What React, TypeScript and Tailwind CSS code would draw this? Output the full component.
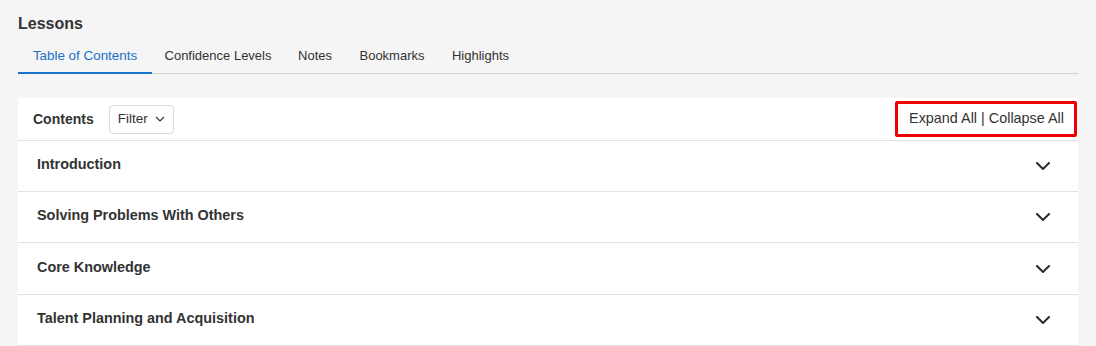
import React from "react";

const Chevron = () => (
  <svg width="14" height="8" viewBox="0 0 14 8" fill="none">
    <path d="M1 1l6 6 6-6" stroke="#2b2b2b" strokeWidth="2" strokeLinecap="square" />
  </svg>
);

const SmallChevron = () => (
  <svg width="10" height="6" viewBox="0 0 10 6" fill="none">
    <path d="M1 1l4 4 4-4" stroke="#333" strokeWidth="1.2" />
  </svg>
);

const tabs: { label: string; w: string }[] = [
  { label: "Table of Contents", w: "w-[134px]" },
  { label: "Confidence Levels", w: "w-[132px]" },
  { label: "Notes", w: "w-[62px]" },
  { label: "Bookmarks", w: "w-[92px]" },
  { label: "Highlights", w: "w-[85px]" },
];
const rows = ["Introduction", "Solving Problems With Others", "Core Knowledge", "Talent Planning and Acquisition"];

export default function App() {
  return (
    <div className="min-h-[346px] bg-[#f5f5f5] px-[18px] pt-[15px] text-[#333]" style={{ fontFamily: '"Liberation Sans", Arial, sans-serif' }}>
      <h1 className="text-[16px] font-bold leading-[18px] text-[#333]">Lessons</h1>
      <div className="mt-[14px] flex border-b border-[#d0d0d0]">
        {tabs.map((t, i) => (
          <div
            key={t.label}
            className={
              i === 0
                ? `${t.w} -mb-px whitespace-nowrap border-b-2 border-[#1a73d0] pt-[1px] pb-[8px] text-center text-[13.4px] leading-[16px] text-[#1a6fc9]`
                : `${t.w} whitespace-nowrap pt-[1px] pb-[8px] text-center text-[13px] leading-[16px] text-[#333]`
            }
          >
            {t.label}
          </div>
        ))}
      </div>
      <div className="mt-[24px] bg-white">
        <div className="flex h-[43px] items-center border-b border-[#e3e3e3] pl-[15px] pr-[2px]">
          <span className="text-[14px] font-bold text-[#333]">Contents</span>
          <button className="ml-[15px] flex h-[29px] items-center gap-[7px] rounded-[4px] border border-[#d9d9d9] bg-white px-[8px] text-[13.5px] text-[#333]">
            Filter
            <SmallChevron />
          </button>
          <div className="ml-auto mr-[-1px] flex h-[36px] items-center rounded-[2px] border-[3px] border-[#f00000] pl-[11px] pr-[10px] text-[14.4px] text-[#333]">
            Expand All | Collapse All
          </div>
        </div>
        {rows.map((r, i) => (
          <div
            key={r}
            className={`flex ${i === 2 ? "h-[52px]" : "h-[51px]"} items-center justify-between border-b border-[#e3e3e3] pl-[19px] pr-[28px]`}
          >
            <span className="-mt-[2px] text-[14.4px] font-bold text-[#333]">{r}</span>
            <Chevron />
          </div>
        ))}
      </div>
    </div>
  );
}
